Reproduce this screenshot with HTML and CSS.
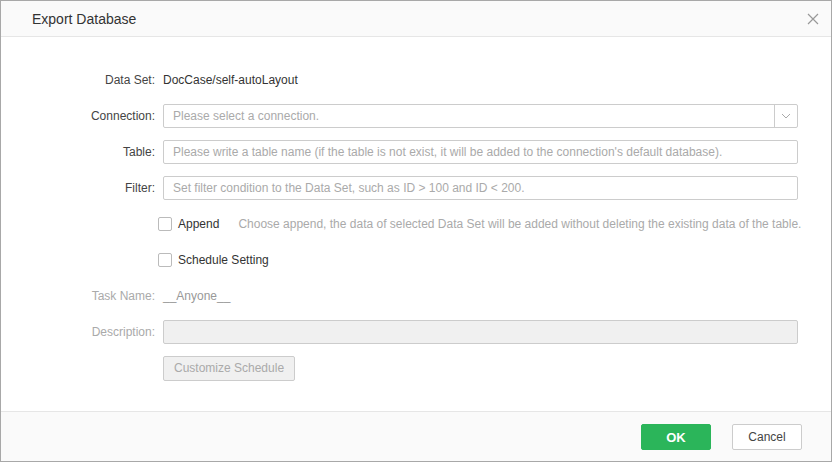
FILE: index.html
```html
<!DOCTYPE html>
<html lang="en">
  <head>
    <meta charset="UTF-8" />
    <meta name="viewport" content="width=device-width, initial-scale=1.0" />
    <link rel="stylesheet" href="styles.css">
  </head>
  <body>
    <div class="dialog">
      <div class="dialog-header">
        <span class="dialog-title">Export Database</span>
        <svg class="close-icon" width="12" height="12" viewBox="0 0 12 12">
          <path d="M1 1 L11 11 M11 1 L1 11" stroke="#999" stroke-width="1.2" fill="none" />
        </svg>
      </div>

      <div class="dialog-body">
        <div class="form-row">
          <label class="form-label">Data Set:</label>
          <span class="form-value">DocCase/self-autoLayout</span>
        </div>

        <div class="form-row">
          <label class="form-label">Connection:</label>
          <div class="select-box">
            <span class="placeholder">Please select a connection.</span>
            <span class="select-arrow">
              <svg width="10" height="6" viewBox="0 0 10 6">
                <path d="M1 1 L5 5 L9 1" stroke="#aaa" stroke-width="1" fill="none" />
              </svg>
            </span>
          </div>
        </div>

        <div class="form-row">
          <label class="form-label">Table:</label>
          <div class="text-box">
            <span class="placeholder">Please write a table name (if the table is not exist, it will be added to the connection's default database).</span>
          </div>
        </div>

        <div class="form-row">
          <label class="form-label">Filter:</label>
          <div class="text-box">
            <span class="placeholder">Set filter condition to the Data Set, such as ID &gt; 100 and ID &lt; 200.</span>
          </div>
        </div>

        <div class="form-row check-row">
          <span class="checkbox"></span>
          <span class="check-text">Append</span>
          <span class="hint">Choose append, the data of selected Data Set will be added without deleting the existing data of the table.</span>
        </div>

        <div class="form-row check-row">
          <span class="checkbox"></span>
          <span class="check-text">Schedule Setting</span>
        </div>

        <div class="form-row disabled">
          <label class="form-label">Task Name:</label>
          <span class="form-value">__Anyone__</span>
        </div>

        <div class="form-row disabled">
          <label class="form-label">Description:</label>
          <div class="text-box grey-box"></div>
        </div>

        <div class="form-row">
          <span class="form-label"></span>
          <button class="btn-disabled">Customize Schedule</button>
        </div>
      </div>

      <div class="dialog-footer">
        <button class="btn-ok">OK</button>
        <button class="btn-cancel">Cancel</button>
      </div>
    </div>
  </body>
</html>
```

FILE: styles.css
```css
html,
body {
  margin: 0;
  padding: 0;
  background-color: #fff;
}

body {
  font-family: "Liberation Sans", Arial, sans-serif;
  font-size: 12px;
  color: #444;
}

.dialog {
  width: 832px;
  height: 462px;
  box-sizing: border-box;
  border: 1px solid #a8a8a8;
  display: flex;
  flex-direction: column;
  background-color: #fff;
}

.dialog-header {
  height: 35px;
  border-bottom: 1px solid #e6e6e6;
  background-color: #fafafa;
  display: flex;
  align-items: center;
  justify-content: space-between;
  padding: 0 12px 0 31px;
}

.dialog-title {
  font-size: 14px;
  color: #333;
  margin-top: 1px;
}

.close-icon {
  margin-top: 1px;
}

.dialog-body {
  flex: 1;
  padding: 31px 33px 0 0;
  display: flex;
  flex-direction: column;
  gap: 12px;
}

.form-row {
  display: flex;
  align-items: center;
  height: 24px;
}

.form-label {
  width: 154px;
  text-align: right;
  padding-right: 8px;
  flex-shrink: 0;
  color: #444;
}

.form-value {
  color: #333;
}

.select-box,
.text-box {
  flex: 1;
  height: 24px;
  box-sizing: border-box;
  border: 1px solid #ccc;
  border-radius: 2px;
  display: flex;
  align-items: center;
  padding-left: 9px;
  background-color: #fff;
}

.select-box {
  padding-right: 0;
}

.select-box .placeholder {
  flex: 1;
}

.select-arrow {
  width: 22px;
  height: 22px;
  border-left: 1px solid #ccc;
  display: flex;
  align-items: center;
  justify-content: center;
}

.placeholder {
  color: #aaa;
  white-space: nowrap;
  overflow: hidden;
}

.grey-box {
  background-color: #f0f0f0;
}

.check-row {
  padding-left: 157px;
}

.checkbox {
  width: 14px;
  height: 14px;
  flex-shrink: 0;
  box-sizing: border-box;
  border: 1px solid #bbb;
  border-radius: 2px;
  background-color: #fff;
  margin-right: 6px;
}

.check-text {
  color: #333;
  flex-shrink: 0;
}

.hint {
  color: #aaa;
  margin-left: 19px;
  white-space: nowrap;
}

.disabled .form-label {
  color: #aaa;
}

.disabled .form-value {
  color: #999;
}

.btn-disabled {
  height: 25px;
  padding: 0 10px;
  font-family: inherit;
  font-size: 12px;
  color: #aaa;
  background-color: #f0f0f0;
  border: 1px solid #ccc;
  border-radius: 2px;
}

.dialog-footer {
  height: 49px;
  border-top: 1px solid #e6e6e6;
  background-color: #fafafa;
  display: flex;
  align-items: center;
  justify-content: flex-end;
  gap: 21px;
  padding-right: 29px;
}

.btn-ok,
.btn-cancel {
  width: 70px;
  height: 26px;
  font-family: inherit;
  border-radius: 2px;
  margin-top: 1px;
}

.btn-ok {
  font-size: 13px;
  font-weight: bold;
  color: #fff;
  background-color: #2bb55a;
  border: 1px solid #2bb55a;
}

.btn-cancel {
  font-size: 12px;
  color: #444;
  background-color: #fff;
  border: 1px solid #ccc;
}
```
